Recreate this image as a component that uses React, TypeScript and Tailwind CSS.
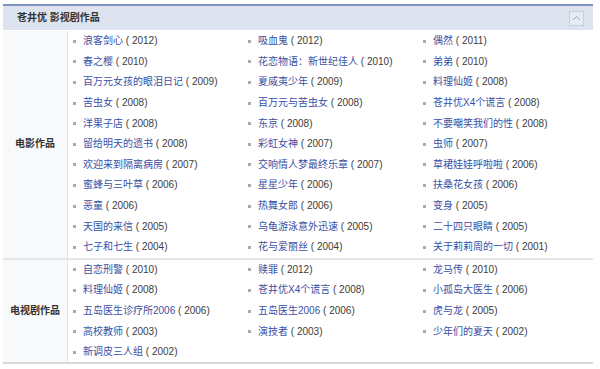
const movies: [string, string][] = [
  ['浪客剑心', '2012'], ['吸血鬼', '2012'], ['偶然', '2011'],
  ['春之樱', '2010'], ['花恋物语：新世纪佳人', '2010'], ['弟弟', '2010'],
  ['百万元女孩的眼泪日记', '2009'], ['夏威夷少年', '2009'], ['料理仙姬', '2008'],
  ['苦虫女', '2008'], ['百万元与苦虫女', '2008'], ['苍井优X4个谎言', '2008'],
  ['洋果子店', '2008'], ['东京', '2008'], ['不要嘲笑我们的性', '2008'],
  ['留给明天的遗书', '2008'], ['彩虹女神', '2007'], ['虫师', '2007'],
  ['欢迎来到隔离病房', '2007'], ['交响情人梦最终乐章', '2007'], ['草裙娃娃呼啦啦', '2006'],
  ['蜜蜂与三叶草', '2006'], ['星星少年', '2006'], ['扶桑花女孩', '2006'],
  ['恶童', '2006'], ['热舞女郎', '2006'], ['变身', '2005'],
  ['天国的来信', '2005'], ['乌龟游泳意外迅速', '2005'], ['二十四只眼睛', '2005'],
  ['七子和七生', '2004'], ['花与爱丽丝', '2004'], ['关于莉莉周的一切', '2001'],
]

const dramas: [string, string][] = [
  ['自恋刑警', '2010'], ['赎罪', '2012'], ['龙马传', '2010'],
  ['料理仙姬', '2008'], ['苍井优X4个谎言', '2008'], ['小孤岛大医生', '2006'],
  ['五岛医生诊疗所2006', '2006'], ['五岛医生2006', '2006'], ['虎与龙', '2005'],
  ['高校教师', '2003'], ['演技者', '2003'], ['少年们的夏天', '2002'],
  ['新调皮三人组', '2002'],
]

function Item({ title, year }: { title: string; year: string }) {
  return (
    <div className="flex items-center h-[20.6px] pl-[5px] whitespace-nowrap">
      <span className="w-[3px] h-[3px] bg-[#aaaaaa] mr-[7px] shrink-0" />
      <span>
        <span className="text-[#3a4fa3]">{title}</span>
        <span className="text-[#3c3c3c]">{` ( ${year})`}</span>
      </span>
    </div>
  )
}

function Section({ label, items, className }: { label: string; items: [string, string][]; className?: string }) {
  return (
    <div className={`flex ${className ?? ''}`}>
      <div className="w-[65px] shrink-0 flex items-center justify-center bg-[#f8f9fa] border-r border-[#e2e3e6] font-bold text-[#333]">
        {label}
      </div>
      <div className="flex-1 grid grid-cols-3 content-start">
        {items.map(([t, y], i) => (
          <Item key={i} title={t} year={y} />
        ))}
      </div>
    </div>
  )
}

export default function App() {
  return (
    <div className="w-[600px] h-[369px] bg-white pt-[4px] pl-[3px]" style={{ fontFamily: '"Liberation Sans", "Noto Sans CJK SC", sans-serif' }}>
      <div className="w-[590px] text-[10px] leading-none">
        <div className="h-[26px] border-t-2 border-[#8092c2] bg-[#dde3ef] flex items-center justify-between pl-[14px] pr-[9px]">
          <span className="font-bold text-[#333]">苍井优 影视剧作品</span>
          <div className="w-[15px] h-[15px] border border-[#c6cddb] bg-[#e7ebf3] flex items-center justify-center">
            <svg width="9" height="6" viewBox="0 0 9 6" fill="none">
              <path d="M1 5 L4.5 1.5 L8 5" stroke="#9aa3b3" strokeWidth="1" />
            </svg>
          </div>
        </div>
        <Section label="电影作品" items={movies} className="pt-px border-b-2 border-[#e4e6ea]" />
        <Section label="电视剧作品" items={dramas} className="h-[104px] border-b-2 border-[#d6d8dc]" />
      </div>
    </div>
  )
}
